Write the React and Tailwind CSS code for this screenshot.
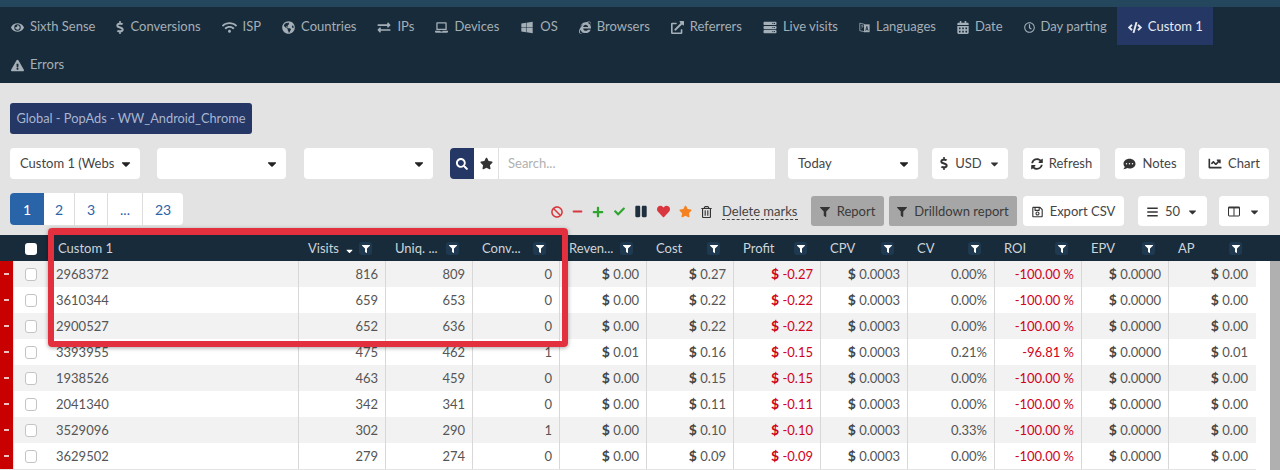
import React from "react";
import { FaEye, FaDollarSign, FaWifi, FaGlobeAmericas, FaExchangeAlt, FaLaptop, FaWindows, FaInternetExplorer, FaExternalLinkAlt, FaServer, FaCalendarAlt, FaRegClock, FaCode, FaExclamationTriangle, FaSearch, FaStar, FaCaretDown, FaSyncAlt, FaCommentDots, FaChartLine, FaBan, FaMinus, FaPlus, FaCheck, FaPause, FaHeart, FaRegTrashAlt, FaFilter, FaRegSave, FaBars } from "react-icons/fa";

const Columns = ({ className }) => (
  <svg viewBox="0 0 14 12" className={className} fill="none" stroke="currentColor" strokeWidth="1.2">
    <rect x="0.6" y="0.8" width="12.8" height="10.4" rx="1" />
    <path d="M7 1v10" />
    <path d="M1 1.6h12" strokeWidth="1.6" />
  </svg>
);
const Lang = ({ className }) => (
  <svg viewBox="0 0 14 14" className={className} fill="currentColor">
    <path d="M1 1.5 7 3v9.5l-6-1.5z" fill="none" stroke="currentColor" strokeWidth="1" />
    <path d="M6.5 3H13.5V13H6.5z" />
    <path d="M8.5 11 10 5.5 11.5 11M9 9.3h2" fill="none" stroke="#182b3a" strokeWidth="1" />
    <path d="M2.5 5h3M4 4v1M3 8c1-.6 2-1.800 2.200-3" fill="none" stroke="currentColor" strokeWidth="0.8" />
  </svg>
);

const tabs = [
  ["Sixth Sense", FaEye, "w-[13px]"], ["Conversions", FaDollarSign, "w-[8px]"], ["ISP", FaWifi, "w-[15px]"], ["Countries", FaGlobeAmericas, "w-[13px]"], ["IPs", FaExchangeAlt, "w-[14px]"],
  ["Devices", FaLaptop, "w-[13px]"], ["OS", FaWindows, "w-[14px]"], ["Browsers", FaInternetExplorer, "w-[12px]"], ["Referrers", FaExternalLinkAlt, "w-[13px]"], ["Live visits", FaServer, "w-[14px]"],
  ["Languages", Lang, "w-[11px]"], ["Date", FaCalendarAlt, "w-[12px]"], ["Day parting", FaRegClock, "w-[11px]"], ["Custom 1", FaCode, "w-[14px]"], ["Errors", FaExclamationTriangle, "w-[13px]"],
];
const heads = ["Visits", "Uniq. ...", "Conv...", "Reven...", "Cost", "Profit", "CPV", "CV", "ROI", "EPV", "AP"];
const rows = [
  ["2968372", 816, 809, 0, "0.00", "0.27", "-0.27", "0.00%", "-100.00 %"],
  ["3610344", 659, 653, 0, "0.00", "0.22", "-0.22", "0.00%", "-100.00 %"],
  ["2900527", 652, 636, 0, "0.00", "0.22", "-0.22", "0.00%", "-100.00 %"],
  ["3393955", 475, 462, 1, "0.01", "0.16", "-0.15", "0.21%", "-96.81 %", "0.01"],
  ["1938526", 463, 459, 0, "0.00", "0.15", "-0.15", "0.00%", "-100.00 %"],
  ["2041340", 342, 341, 0, "0.00", "0.11", "-0.11", "0.00%", "-100.00 %"],
  ["3529096", 302, 290, 1, "0.00", "0.10", "-0.10", "0.33%", "-100.00 %"],
  ["3629502", 279, 274, 0, "0.00", "0.09", "-0.09", "0.00%", "-100.00 %"],
];

function Btn({ icon: I, children, caret, w, iconClass = "w-[13px] h-[13px]", className = "" }) {
  return (
    <button className={`bg-white rounded-[4px] flex items-center justify-center gap-[7px] text-[13px] text-[#444] whitespace-nowrap ${w} ${className}`}>
      {I && <I className={`${iconClass} text-[#333]`} />}
      {children}
      {caret && <FaCaretDown className="w-[11px] h-[12px] text-[#333]" />}
    </button>
  );
}
function Sel({ w, children }) {
  return (
    <div className={`h-[31px] bg-white rounded-[4px] flex items-center justify-between pl-[10px] pr-[9px] text-[13px] text-[#444] whitespace-nowrap ${w}`}>
      <span>{children}</span>
      <FaCaretDown className="w-[10px] h-[14px] text-[#222]" />
    </div>
  );
}
function Money({ v, red }) {
  return (
    <span className={red ? "text-[#d0021b]" : ""}>
      <span className={`font-bold text-[14px] leading-none ${red ? "text-[#d0021b]" : "text-[#444]"}`}>$</span> {v}
    </span>
  );
}
function Cell({ children }) {
  return <div className="w-[87px] h-full shrink-0 border-l border-[#d8d8d8] flex items-center justify-end pr-[7px] pt-[1px]">{children}</div>;
}

export default function App() {
  return (
    <div className="relative h-[470px] overflow-hidden bg-[#e3e3e3] font-['Lato','Noto_Sans',sans-serif] text-[13px] text-[#555]">
      <div className="h-[7px] bg-[#24475e]" />
      <nav className="bg-[#182b3a] flex flex-wrap text-[#a4afb7]">
        {tabs.map(([t, I, iw]) => (
          <div key={t} className={`h-[38px] pl-[11px] pr-[10px] pt-[2px] flex items-center gap-[6px] whitespace-nowrap ${t === "Custom 1" ? "bg-[#253764] text-[#e6eaf0]" : ""}`}>
            <I className={`${iw} h-[13px]`} />
            {t}
          </div>
        ))}
      </nav>

      <div className="px-[10px] pt-[20px]">
        <div className="w-[242px] h-[31px] bg-[#253764] rounded-[3px] text-[#a9b5cf] text-[12.8px] flex items-center justify-center whitespace-nowrap">Global - PopAds - WW_Android_Chrome</div>

        <div className="flex items-center mt-[14px]">
          <Sel w="w-[130px]">Custom 1 (Webs</Sel>
          <Sel w="w-[129px] ml-[17px]"> </Sel>
          <Sel w="w-[129px] ml-[18px]"> </Sel>
          <div className="ml-[17px] flex h-[31px] w-[325px]">
            <div className="w-[24px] bg-[#253764] rounded-l-[4px] flex items-center justify-center text-white"><FaSearch className="text-[12px]" /></div>
            <div className="w-[25px] bg-white border-r border-[#e0e0e0] flex items-center justify-center text-[#333]"><FaStar className="text-[13px]" /></div>
            <div className="flex-1 bg-white flex items-center pl-[9px] text-[#b0b0b0]">Search...</div>
          </div>
          <Sel w="w-[130px] ml-[13px]">Today</Sel>
          <Btn w="w-[76px] h-[31px] ml-[14px]" caret icon={FaDollarSign} iconClass="w-[8px] h-[13px]">USD</Btn>
          <Btn w="w-[77px] h-[31px] ml-[15px]" icon={FaSyncAlt} iconClass="w-[12px] h-[12px]" className="!gap-[6px]">Refresh</Btn>
          <Btn w="w-[70px] h-[31px] ml-[15px]" icon={FaCommentDots} iconClass="w-[13px] h-[12px]" className="!gap-[6px]">Notes</Btn>
          <Btn w="w-[70px] h-[31px] ml-[14px]" icon={FaChartLine} iconClass="w-[14px] h-[13px]" className="!gap-[6px]">Chart</Btn>
        </div>

        <div className="flex items-end mt-[14px] h-[33px]">
          <div className="flex h-[32px] self-start bg-white rounded-[4px] text-[#2a64a8] text-[14px]">
            <div className="w-[34px] bg-[#2a64a8] text-white rounded-l-[4px] flex items-center justify-center">1</div>
            <div className="w-[31px] border-r border-[#ddd] flex items-center justify-center">2</div>
            <div className="w-[33px] border-r border-[#ddd] flex items-center justify-center">3</div>
            <div className="w-[35px] border-r border-[#ddd] flex items-center justify-center">...</div>
            <div className="w-[40px] flex items-center justify-center">23</div>
          </div>
          <div className="ml-[368px] w-[260px] h-[30px] pt-[1px] flex items-center shrink-0">
            <FaBan className="text-[#d9363e] w-[12px] h-[12px]" />
            <FaMinus className="text-[#d9363e] w-[11px] h-[11px] ml-[9px]" />
            <FaPlus className="text-[#2fa52f] w-[12px] h-[12px] ml-[9px]" />
            <FaCheck className="text-[#2fa52f] w-[11px] h-[11px] ml-[10px]" />
            <FaPause className="text-[#1f2f3d] w-[12px] h-[13px] ml-[10px]" />
            <FaHeart className="text-[#d9363e] w-[13px] h-[13px] ml-[10px]" />
            <FaStar className="text-[#f58220] w-[13px] h-[13px] ml-[9px]" />
            <FaRegTrashAlt className="text-[#333] w-[11px] h-[12px] ml-[9px]" />
            <span className="ml-[10px] text-[#444] border-b border-dashed border-[#444] leading-[15px] whitespace-nowrap">Delete marks</span>
          </div>
          <Btn w="w-[73px] h-[30px] pt-[1px] !bg-[#a6a6a6] !rounded-[3px] !text-[#3a3a3a]" icon={FaFilter} iconClass="w-[10px] h-[10px]">Report</Btn>
          <Btn w="w-[128px] h-[30px] pt-[1px] ml-[5px] !bg-[#a6a6a6] !rounded-[2px] !text-[#3a3a3a]" icon={FaFilter} iconClass="w-[10px] h-[10px]">Drilldown report</Btn>
          <Btn w="w-[101px] h-[30px] pt-[1px] ml-[6px]" icon={FaRegSave} iconClass="w-[11px] h-[12px]">Export CSV</Btn>
          <Btn w="w-[69px] h-[30px] pt-[1px] ml-[14px]" icon={FaBars} iconClass="w-[11px] h-[12px]" caret>50</Btn>
          <Btn w="w-[50px] h-[30px] pt-[1px] ml-[12px]" icon={Columns} iconClass="w-[12px] h-[11px]" className="!gap-[9px]" caret />
        </div>
      </div>

      <div className="mt-[9px]">
        <div className="h-[26px] pt-[1px] bg-[#182b3a] flex items-center text-[#cdd4da]">
          <div className="w-[48px] flex justify-end pr-[11px]"><div className="w-[12px] h-[12px] bg-white rounded-[3px]" /></div>
          <div className="w-[250px] pl-[10px]">Custom 1</div>
          {heads.map((h) => (
            <div key={h} className="w-[87px] shrink-0 pl-[10px] pr-[13px] flex items-center whitespace-nowrap">
              <span className="flex-1">{h}</span>
              {h === "Visits" && <FaCaretDown className="w-[9px] h-[10px] text-white mr-[5px] mt-[4px]" />}
              <span className="w-[13px] h-[13px] rounded-[3px] bg-[#1f3a50] flex items-center justify-center"><FaFilter className="w-[8px] h-[8px] text-white" /></span>
            </div>
          ))}
        </div>
        <div className="flex">
          <div className="w-[1256px]">
            {rows.map((r, i) => (
              <div key={r[0]} className="h-[26px] flex items-center">
                <div className="w-[13px] h-full bg-[#c80000] flex items-center justify-center"><span className="w-[5px] h-[2px] bg-[#f2c0c0]" /></div>
                <div className={`flex items-center h-full flex-1 ml-[1px] ${i % 2 === 0 ? "bg-[#f2f2f2]" : "bg-white"}`}>
                  <div className="w-[34px] flex justify-end pr-[11px] shrink-0"><div className="w-[12px] h-[13px] bg-white border border-[#c4c4c4] rounded-[3px]" /></div>
                  <div className="w-[250px] pl-[8px] pt-[1px] shrink-0">{r[0]}</div>
                  <Cell>{r[1]}</Cell>
                  <Cell>{r[2]}</Cell>
                  <Cell>{r[3]}</Cell>
                  <Cell><Money v={r[4]} /></Cell>
                  <Cell><Money v={r[5]} /></Cell>
                  <Cell><span className="text-[#d0021b]"><Money v={r[6]} red /></span></Cell>
                  <Cell><Money v="0.0003" /></Cell>
                  <Cell>{r[7]}</Cell>
                  <Cell><span className="text-[#d0021b]">{r[8]}</span></Cell>
                  <Cell><Money v="0.0000" /></Cell>
                  <Cell><Money v={r[9] || "0.00"} /></Cell>
                </div>
              </div>
            ))}
          </div>
          <div className="w-[14px] bg-white" />
          <div className="w-[10px] h-[209px] bg-[#b0b0b0]" />
        </div>
      </div>

      <div className="absolute left-[48px] top-[228px] w-[520px] h-[119px] border-[6px] border-t-[7px] border-[#e3303f] rounded-[4px] shadow-[0_1px_4px_rgba(0,0,0,0.35)] pointer-events-none" />
    </div>
  );
}
